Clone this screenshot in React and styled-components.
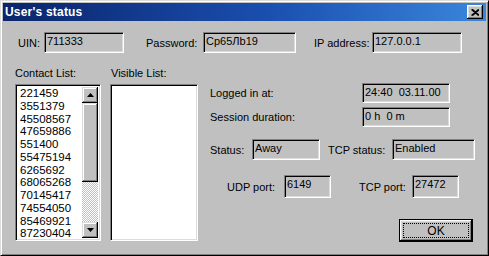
import React from 'react';
import styled, { createGlobalStyle } from 'styled-components';

const GlobalStyle = createGlobalStyle`
  html, body {
    margin: 0;
    padding: 0;
    background: #c0c0c0;
  }
  body {
    font-family: "Liberation Sans", Arial, sans-serif;
    font-size: 11px;
    color: #000;
  }
`;

// outer dialog frame, classic raised 3D border
const Window = styled.div`
  width: 489px;
  height: 256px;
  box-sizing: border-box;
  padding: 2px;
  background: #c0c0c0;
  border: 1px solid;
  border-color: #dcdcdc #000 #000 #dcdcdc;
  box-shadow: inset 1px 1px #fff, inset -1px -1px #808080;
  display: flex;
  flex-direction: column;
`;

const TitleBar = styled.div`
  height: 18px;
  flex: none;
  display: flex;
  align-items: center;
  justify-content: space-between;
  padding: 0 3px 0 2px;
  background: linear-gradient(90deg, #0a246a 0%, #1a4fb0 55%, #3a86dc 100%);
  color: #fff;
  font-weight: bold;
  font-size: 12px;
  letter-spacing: 0.2px;
`;

const CloseButton = styled.button`
  width: 16px;
  height: 14px;
  padding: 0;
  margin: 0;
  background: #c0c0c0;
  border: none;
  box-shadow: inset -1px -1px #000, inset 1px 1px #fff, inset -2px -2px #808080, inset 2px 2px #dcdcdc;
  display: flex;
  align-items: center;
  justify-content: center;
`;

const Body = styled.div`
  flex: 1;
  display: flex;
  flex-direction: column;
  padding-top: 11px;
`;

const Row = styled.div`
  display: flex;
  align-items: center;
  height: ${p => p.$h || 21}px;
  margin-top: ${p => p.$mt || 0}px;
  padding-left: ${p => p.$pl || 0}px;
`;

const Label = styled.span`
  width: ${p => p.$w}px;
  margin-left: ${p => p.$ml || 0}px;
  flex: none;
  white-space: nowrap;
`;

// sunken read-only edit field
const Field = styled.div`
  width: ${p => p.$w}px;
  height: ${p => p.$h || 21}px;
  box-sizing: border-box;
  flex: none;
  padding: 1px 2px 0;
  line-height: 15px;
  background: #c0c0c0;
  border: 1px solid;
  border-color: #808080 #fff #fff #808080;
  box-shadow: inset 1px 1px #000, inset -1px -1px #dcdcdc;
  white-space: nowrap;
  overflow: hidden;
`;

const Lower = styled.div`
  display: flex;
  margin-top: 11px;
`;

const ListsColumn = styled.div`
  display: flex;
  gap: 9px;
  margin-left: 12px;
`;

const ListGroup = styled.div`
  display: flex;
  flex-direction: column;
  width: ${p => p.$w}px;
`;

const ListCaption = styled.div`
  height: 20px;
  line-height: 18px;
  padding-left: ${p => p.$pl || 0}px;
`;

const ListBox = styled.div`
  height: 157px;
  box-sizing: border-box;
  background: #fff;
  border: 1px solid;
  border-color: #808080 #fff #fff #808080;
  box-shadow: inset 1px 1px #000, inset -1px -1px #dcdcdc;
  padding: 2px 2px 2px 4px;
  display: flex;
`;

const Items = styled.ul`
  flex: 1;
  list-style: none;
  margin: 0;
  padding: 0;
  overflow: hidden;
  line-height: 12.75px;
  font-size: 11.5px;
`;

const Scrollbar = styled.div`
  width: 16px;
  flex: none;
  display: flex;
  flex-direction: column;
  background: repeating-conic-gradient(#fff 0 25%, #c0c0c0 0 50%) 0 0 / 2px 2px;
`;

const ScrollPart = styled.div`
  height: ${p => p.$h}px;
  flex: none;
  background: #c0c0c0;
  box-sizing: border-box;
  box-shadow: inset -1px -1px #000, inset 1px 1px #dcdcdc, inset -2px -2px #808080, inset 2px 2px #fff;
  display: flex;
  align-items: center;
  justify-content: center;
`;

const Track = styled.div`
  flex: 1;
`;

const RightPanel = styled.div`
  display: flex;
  flex-direction: column;
  margin-left: 12px;
  padding-top: 19px;
  width: 265px;
`;

const ButtonRow = styled.div`
  display: flex;
  justify-content: flex-end;
  padding-right: 2px;
  margin-top: 21px;
`;

const OkButton = styled.button`
  width: 74px;
  height: 23px;
  padding: 3px;
  margin: 0;
  background: #c0c0c0;
  border: 1px solid #000;
  box-shadow: inset -1px -1px #000, inset 1px 1px #fff, inset -2px -2px #808080, inset 2px 2px #dcdcdc;
  font: inherit;
  font-size: 12px;
  color: #000;
  display: flex;
`;

const FocusRect = styled.span`
  flex: 1;
  border: 1px dotted #000;
  display: flex;
  align-items: center;
  justify-content: center;
  line-height: 12px;
`;

const Arrow = ({ up }) => (
  <svg width="7" height="4" viewBox="0 0 7 4">
    <path d={up ? 'M3.5 0 L7 4 L0 4 Z' : 'M0 0 L7 0 L3.5 4 Z'} fill="#000" />
  </svg>
);

const contacts = [
  '221459', '3551379', '45508567', '47659886', '551400', '55475194',
  '6265692', '68065268', '70145417', '74554050', '85469921', '87230404',
];

export default function App() {
  return (
    <>
      <GlobalStyle />
      <Window>
        <TitleBar>
          <span>User's status</span>
          <CloseButton>
            <svg width="8" height="7" viewBox="0 0 8 7">
              <path d="M0.5 0.5 L7.5 6.5 M7.5 0.5 L0.5 6.5 M1.5 0.5 L8.5 6.5 M8.5 0.5 L1.5 6.5" stroke="#000" strokeWidth="1.2" />
            </svg>
          </CloseButton>
        </TitleBar>
        <Body>
          <Row $pl={15}>
            <Label $w={26}>UIN:</Label>
            <Field $w={80}>711333</Field>
            <Label $w={57} $ml={22}>Password:</Label>
            <Field $w={93}>Ср65Лb19</Field>
            <Label $w={58} $ml={18}>IP address:</Label>
            <Field $w={90}>127.0.0.1</Field>
          </Row>
          <Lower>
            <ListsColumn>
              <ListGroup $w={86}>
                <ListCaption>Contact List:</ListCaption>
                <ListBox>
                  <Items>
                    {contacts.map(c => <li key={c}>{c}</li>)}
                  </Items>
                  <Scrollbar>
                    <ScrollPart $h={16}><Arrow up /></ScrollPart>
                    <ScrollPart $h={79} />
                    <Track />
                    <ScrollPart $h={16}><Arrow /></ScrollPart>
                  </Scrollbar>
                </ListBox>
              </ListGroup>
              <ListGroup $w={88}>
                <ListCaption $pl={1}>Visible List:</ListCaption>
                <ListBox />
              </ListGroup>
            </ListsColumn>
            <RightPanel>
              <Row $h={20}>
                <Label $w={152}>Logged in at:</Label>
                <Field $w={88} $h={20}>24:40&nbsp;&nbsp;03.11.00</Field>
              </Row>
              <Row $h={20} $mt={4}>
                <Label $w={152}>Session duration:</Label>
                <Field $w={88} $h={20}>0 h&nbsp;&nbsp;0 m</Field>
              </Row>
              <Row $mt={12}>
                <Label $w={42}>Status:</Label>
                <Field $w={68}>Away</Field>
                <Label $w={64} $ml={8}>TCP status:</Label>
                <Field $w={83}>Enabled</Field>
              </Row>
              <Row $mt={15} $h={23}>
                <Label $w={57} $ml={17}>UDP port:</Label>
                <Field $w={47} $h={23}>6149</Field>
                <Label $w={53} $ml={28}>TCP port:</Label>
                <Field $w={47} $h={23}>27472</Field>
              </Row>
              <ButtonRow>
                <OkButton><FocusRect>OK</FocusRect></OkButton>
              </ButtonRow>
            </RightPanel>
          </Lower>
        </Body>
      </Window>
    </>
  );
}
